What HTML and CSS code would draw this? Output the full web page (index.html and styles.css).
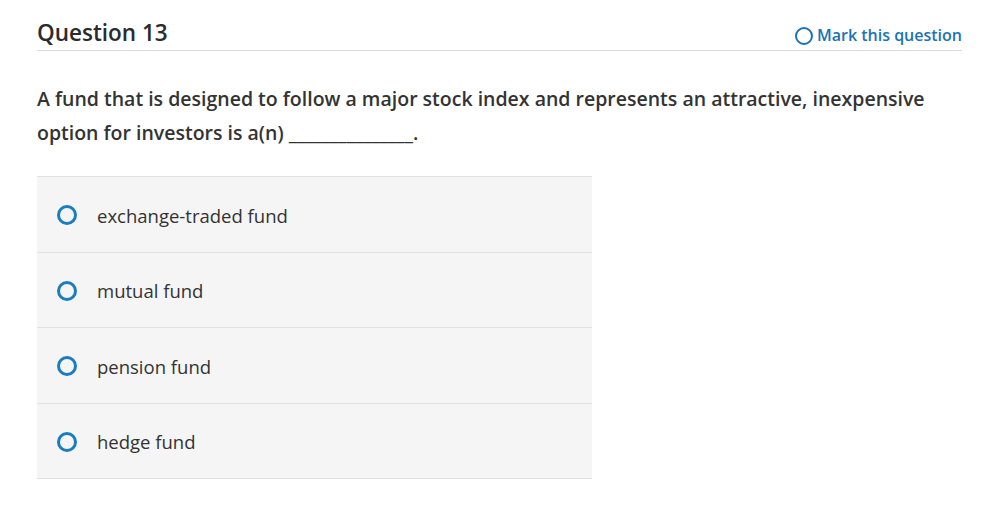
FILE: index.html
```html
<!DOCTYPE html>
<html lang="en">
<head>
<meta charset="utf-8">
<title>Question 13</title>
<link rel="stylesheet" href="styles.css">
</head>
<body>
<div class="page">
  <div class="header">
    <h1 class="title">Question 13</h1>
    <a class="mark" href="#"><span class="mark-icon"></span>Mark this question</a>
  </div>
  <p class="prompt">A fund that is designed to follow a major stock index and represents an attractive, inexpensive option for investors is a(n) _______________.</p>
  <div class="options">
    <label class="option"><span class="radio"></span><span class="option-text">exchange-traded fund</span></label>
    <label class="option"><span class="radio"></span><span class="option-text">mutual fund</span></label>
    <label class="option"><span class="radio"></span><span class="option-text">pension fund</span></label>
    <label class="option"><span class="radio"></span><span class="option-text">hedge fund</span></label>
  </div>
</div>
</body>
</html>
```
FILE: styles.css
```css
* { box-sizing: border-box; }
body {
  margin: 0;
  background: #fff;
  font-family: "Open Sans", "Liberation Sans", sans-serif;
  color: #333;
}
.page {
  padding: 19px 46px 0 37px;
}
.header {
  display: flex;
  justify-content: space-between;
  align-items: flex-end;
  border-bottom: 1px solid #ddd;
  padding-bottom: 4px;
}
.title {
  margin: 0;
  font-size: 22.5px;
  font-weight: 600;
  line-height: 27px;
  color: #2b2b2b;
}
.mark {
  display: flex;
  align-items: center;
  gap: 4px;
  color: #1a73b5;
  text-decoration: none;
  font-size: 16px;
  font-weight: 600;
  line-height: 21px;
}
.mark-icon {
  width: 18px;
  height: 18px;
  border: 2px solid #1a73b5;
  border-radius: 50%;
}
.prompt {
  margin: 31px 0 0;
  font-size: 19.5px;
  font-weight: 600;
  line-height: 34px;
  max-width: 900px;
}
.options {
  margin-top: 26px;
  width: 555px;
  background: #f5f5f5;
  border-top: 1px solid #e0e0e0;
}
.option {
  display: flex;
  align-items: center;
  height: 75.5px;
  padding: 2px 0 0 20px;
  border-bottom: 1px solid #e0e0e0;
  cursor: pointer;
}
.radio {
  width: 20px;
  height: 20px;
  border: 3px solid #1a7cc1;
  border-radius: 50%;
  flex: none;
}
.option-text {
  margin-left: 20px;
  font-size: 18.5px;
  color: #333;
}
```
